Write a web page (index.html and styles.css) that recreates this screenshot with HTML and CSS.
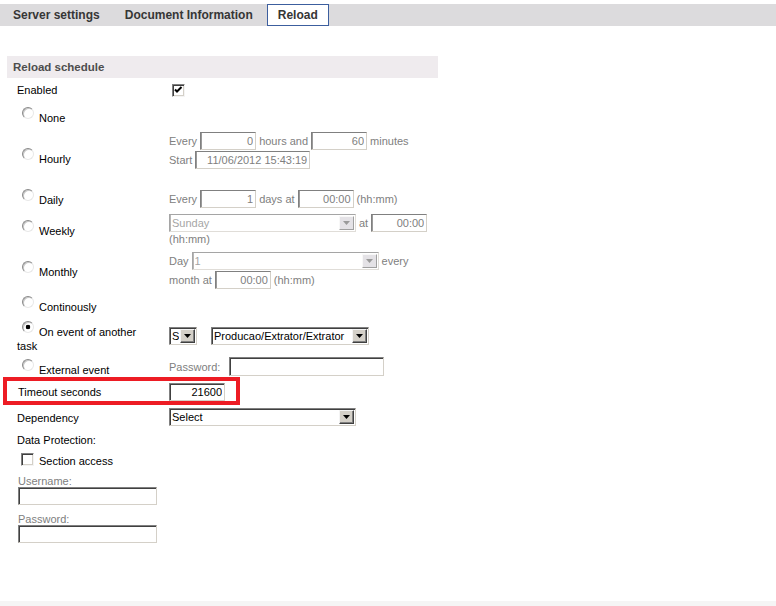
FILE: index.html
```html
<!DOCTYPE html>
<html lang="en">
<head>
    <meta charset="UTF-8">
    <title>Reload</title>
    <link rel="stylesheet" href="styles.css">
</head>
<body>
    <div class="page">
        <div class="tabs">
            <span class="tab">Server settings</span>
            <span class="tab">Document Information</span>
            <span class="tab tab-active">Reload</span>
        </div>

        <div class="schedule">
            <div class="schedule-title">Reload schedule</div>

            <div class="row row-enabled">
                <div class="label">Enabled</div>
                <div class="field">
                    <span class="check"><svg width="11" height="11" viewBox="0 0 11 11"><polyline points="2,4.5 4,6.5 8.5,2" fill="none" stroke="#000" stroke-width="2"/></svg></span>
                </div>
            </div>

            <div class="row row-none">
                <div class="label"><label class="opt"><input type="radio" name="sched">None</label></div>
                <div class="field"></div>
            </div>

            <div class="row row-hourly">
                <div class="label"><label class="opt"><input type="radio" name="sched">Hourly</label></div>
                <div class="field off">
                    <div class="line">Every <input class="num" value="0" disabled> hours and <input class="num" value="60" disabled> minutes</div>
                    <div class="line">Start <input class="date" value="11/06/2012 15:43:19" disabled></div>
                </div>
            </div>

            <div class="row row-daily">
                <div class="label"><label class="opt"><input type="radio" name="sched">Daily</label></div>
                <div class="field off">
                    <div class="line">Every <input class="num" value="1" disabled> days at <input class="num" value="00:00" disabled> (hh:mm)</div>
                </div>
            </div>

            <div class="row row-weekly">
                <div class="label"><label class="opt"><input type="radio" name="sched">Weekly</label></div>
                <div class="field off">
                    <div class="line">
                        <span class="select sel-wide"><select disabled><option>Sunday</option></select><span class="arrow"><svg width="7" height="4" viewBox="0 0 7 4"><polygon points="0,0 7,0 3.5,4"/></svg></span></span>
                        at <input class="num" value="00:00" disabled>
                    </div>
                    <div class="text-line">(hh:mm)</div>
                </div>
            </div>

            <div class="row row-monthly">
                <div class="label"><label class="opt"><input type="radio" name="sched">Monthly</label></div>
                <div class="field off">
                    <div class="line">
                        Day <span class="select sel-day"><select disabled><option>1</option></select><span class="arrow"><svg width="7" height="4" viewBox="0 0 7 4"><polygon points="0,0 7,0 3.5,4"/></svg></span></span> every
                    </div>
                    <div class="line">month at <input class="num" value="00:00" disabled> (hh:mm)</div>
                </div>
            </div>

            <div class="row row-cont">
                <div class="label"><label class="opt"><input type="radio" name="sched">Continously</label></div>
                <div class="field"></div>
            </div>

            <div class="row row-event">
                <div class="label"><label class="opt"><input type="radio" name="sched" checked>On event of another task</label></div>
                <div class="field">
                    <div class="line line-event">
                        <span class="select sel-tiny"><select><option>Success</option></select><span class="arrow"><svg width="7" height="4" viewBox="0 0 7 4"><polygon points="0,0 7,0 3.5,4"/></svg></span></span>
                        <span class="select sel-task"><select><option>Producao/Extrator/Extrator</option></select><span class="arrow"><svg width="7" height="4" viewBox="0 0 7 4"><polygon points="0,0 7,0 3.5,4"/></svg></span></span>
                    </div>
                </div>
            </div>

            <div class="row row-external">
                <div class="label"><label class="opt"><input type="radio" name="sched">External event</label></div>
                <div class="field">
                    <div class="line"><span class="muted">Password:</span> <input class="pass" type="password"></div>
                </div>
            </div>

            <div class="row row-timeout">
                <div class="label">Timeout seconds</div>
                <div class="field">
                    <input class="num" value="21600">
                </div>
            </div>

            <div class="row row-dep">
                <div class="label">Dependency</div>
                <div class="field">
                    <span class="select sel-wide"><select><option>Select</option></select><span class="arrow"><svg width="7" height="4" viewBox="0 0 7 4"><polygon points="0,0 7,0 3.5,4"/></svg></span></span>
                </div>
            </div>

            <div class="plain plain-prot">Data Protection:</div>
            <div class="plain plain-section"><span class="check"></span>Section access</div>

            <div class="cred">
                <div class="muted">Username:</div>
                <input class="login" type="text">
                <div class="muted cred-next">Password:</div>
                <input class="login" type="password">
            </div>
        </div>
    </div>
</body>
</html>
```

FILE: styles.css
```css
body {
    margin: 0;
    font: 11px/14px "Liberation Sans", Arial, sans-serif;
    color: #000;
    background: #fff;
}
.page {
    height: 606px;
    box-sizing: border-box;
    padding-top: 4px;
    border-bottom: 5px solid #f5f5f5;
}

/* tabs */
.tabs {
    display: flex;
    gap: 3px;
    height: 22px;
    padding-left: 2px;
    background: #dcdbdd;
}
.tab {
    padding: 0 11px;
    line-height: 22px;
    font-size: 12px;
    font-weight: bold;
    color: #363636;
}
.tab-active {
    line-height: 20px;
    padding: 0 10px;
    background: #fff;
    border: 1px solid #3c5e9e;
}

/* schedule block */
.schedule {
    width: 431px;
    margin: 30px 0 0 7px;
}
.schedule-title {
    height: 22px;
    line-height: 22px;
    padding-left: 6px;
    background: #efebee;
    font-size: 11.5px;
    font-weight: bold;
    color: #4d4d4d;
}
.row {
    display: grid;
    grid-template-columns: 162px 1fr;
    box-sizing: border-box;
}
.label {
    padding: 0 24px 0 10px;
}
.field {
    white-space: nowrap;
}
.off {
    color: #808080;
}
.muted {
    color: #808080;
}
.line {
    display: flex;
    align-items: center;
    gap: 3px;
    height: 19px;
}
.text-line {
    height: 14px;
}

/* row geometry */
.row-enabled { height: 24px; }
.row-enabled .label { padding-top: 5px; }
.row-enabled .field { padding: 6px 0 0 3px; }
.row-none { height: 26px; }
.row-none .label { padding-top: 9px; }
.row-hourly { height: 42px; }
.row-hourly .label { padding-top: 24px; }
.row-hourly .field { padding-top: 3px; }
.row-daily { height: 38px; }
.row-daily .label { padding-top: 23px; }
.row-daily .field { padding-top: 19px; }
.row-weekly { height: 40px; }
.row-weekly .label { padding-top: 16px; }
.row-weekly .field { padding-top: 5px; }
.row-monthly { height: 44px; }
.row-monthly .label { padding-top: 17px; }
.row-monthly .field { padding-top: 3px; }
.row-cont { height: 24px; }
.row-cont .label { padding-top: 8px; }
.row-event { height: 36px; }
.row-event .label { padding-top: 9px; }
.row-event .field { padding-top: 10px; }
.line-event { gap: 14px; }
.row-external { height: 25px; }
.row-external .label { padding-top: 11px; }
.row-external .field { padding-top: 5px; }
.row-external .line { gap: 9px; }
.row-timeout {
    width: 237px;
    height: 28px;
    margin-left: -4px;
    border: 4px solid #ed1c24;
}
.row-timeout .label { padding: 4px 0 0 11px; }
.row-timeout .field { padding-top: 2px; }
.row-dep { height: 25px; }
.row-dep .label { padding-top: 6px; }
.row-dep .field { padding-top: 3px; }

.plain {
    height: 20px;
    box-sizing: border-box;
    padding-left: 10px;
}
.plain-prot { padding-top: 3px; }
.plain-section { padding-top: 4px; }
.plain-section .check {
    vertical-align: top;
    margin: -1px 5px 0 4px;
}

.cred {
    padding: 4px 0 0 11px;
}
.cred .login {
    display: block;
    margin-top: -1px;
}
.cred .cred-next {
    margin-top: 7px;
}

/* controls */
input.num, input.date, input.pass, input.login {
    box-sizing: border-box;
    height: 18px;
    margin: 0;
    padding: 0 2px;
    font: 11px "Liberation Sans", Arial, sans-serif;
    color: #000;
    background: #fff;
    border: 1px solid;
    border-color: #808080 #d4d0c8 #d4d0c8 #808080;
    box-shadow: inset 1px 1px 0 #404040;
    outline: none;
}
input:disabled {
    color: #808080;
    box-shadow: inset 1px 0 0 #9a9a9a;
}
input.num {
    width: 56px;
    text-align: right;
}
input.date {
    width: 115px;
    text-align: right;
}
input.pass {
    width: 155px;
    height: 19px;
}
input.login {
    width: 139px;
}

.select {
    position: relative;
    display: inline-block;
    height: 18px;
}
.select select {
    appearance: none;
    box-sizing: border-box;
    width: 100%;
    height: 18px;
    margin: 0;
    padding: 0 17px 0 2px;
    font: 11px "Liberation Sans", Arial, sans-serif;
    color: #000;
    background: #fff;
    border: 1px solid;
    border-color: #808080 #d4d0c8 #d4d0c8 #808080;
    box-shadow: inset 1px 1px 0 #404040;
    border-radius: 0;
    outline: none;
}
.select select:disabled {
    color: #808080;
    box-shadow: inset 1px 0 0 #9a9a9a;
}
.select .arrow {
    position: absolute;
    top: 2px;
    right: 2px;
    width: 15px;
    height: 14px;
    box-sizing: border-box;
    display: flex;
    align-items: center;
    justify-content: center;
    background: #d4d0c8;
    border: 1px solid;
    border-color: #f4f4f4 #404040 #404040 #f4f4f4;
    box-shadow: inset -1px -1px 0 #808080;
    pointer-events: none;
}
.select .arrow svg {
    fill: #000;
}
.off .select .arrow {
    background: #e4e2e6;
    border-color: #f8f8f8 #a0a0a0 #a0a0a0 #f8f8f8;
    box-shadow: none;
}
.off .select .arrow svg {
    fill: #9a9a9a;
}
.sel-wide { width: 187px; }
.sel-day { width: 187px; }
.sel-tiny { width: 28px; }
.sel-task { width: 158px; }

.opt input {
    appearance: none;
    width: 12px;
    height: 12px;
    margin: -4px 5px 0 5px;
    vertical-align: top;
    box-sizing: border-box;
    border-radius: 50%;
    border: 1px solid;
    border-color: #8a8a8a #e8e8e8 #e8e8e8 #8a8a8a;
    box-shadow: inset 1px 1px 0 #c8c8c8;
    background: #fff;
}
.opt input:checked {
    background: radial-gradient(circle, #000 0 2px, #fff 2.6px);
}

.check {
    display: inline-block;
    width: 13px;
    height: 13px;
    box-sizing: border-box;
    border: 1px solid;
    border-color: #808080 #f4f4f4 #f4f4f4 #808080;
    box-shadow: inset 1px 1px 0 #404040, inset -1px -1px 0 #d4d0c8;
    background: #fff;
}
.check svg {
    display: block;
}
```
